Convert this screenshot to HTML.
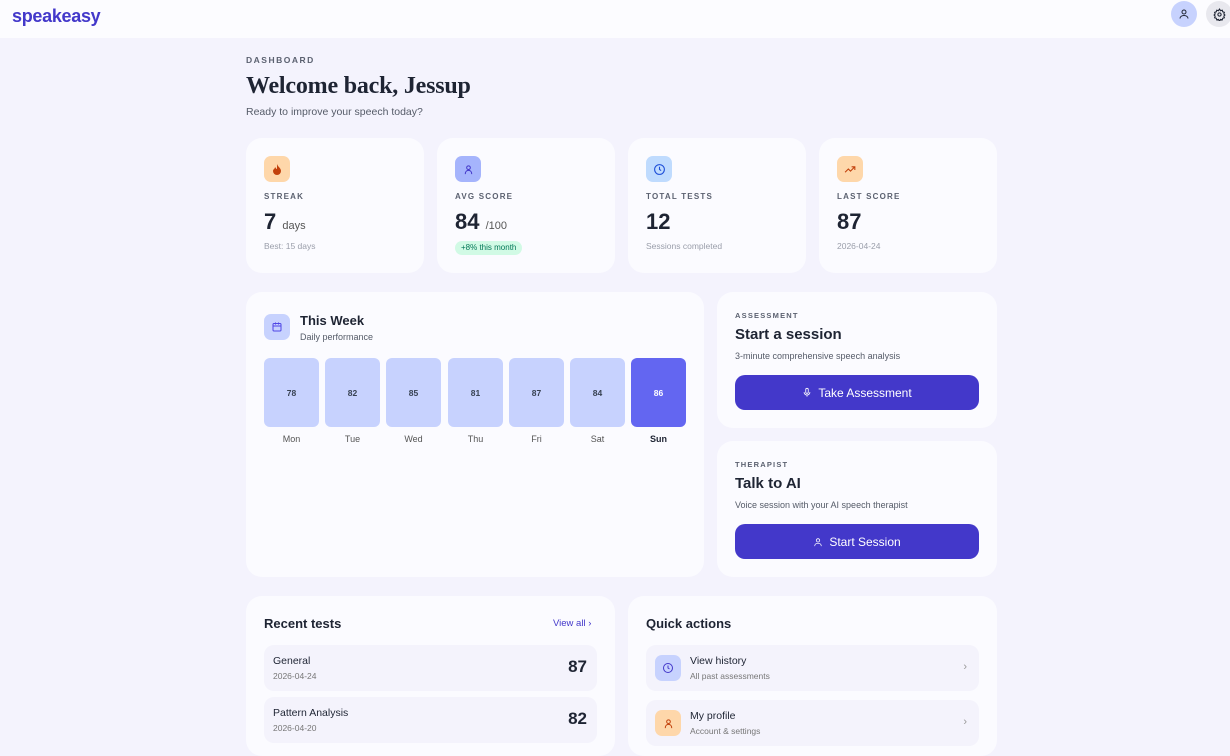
<!DOCTYPE html><html><head><style>
*{box-sizing:border-box;margin:0;padding:0}
body{width:1230px;height:729px;overflow:hidden;background:#f4f3fd;font-family:"Liberation Sans",sans-serif;color:#1e2433;position:relative}
.hdr{position:absolute;left:0;top:0;width:1230px;height:38px;background:#fcfcff}
.logo{position:absolute;left:12px;top:6px;font-size:18px;font-weight:bold;color:#4338ca;letter-spacing:-0.3px}
.circ{position:absolute;top:1px;width:26px;height:26px;border-radius:50%;display:flex;align-items:center;justify-content:center}
.card{position:absolute;background:#fbfbff;border-radius:16px}
.ico{position:absolute;width:26px;height:26px;border-radius:7px;display:flex;align-items:center;justify-content:center}
.lbl{position:absolute;font-size:8px;font-weight:bold;letter-spacing:1.2px;color:#5b6170}
.big{position:absolute;font-size:22px;font-weight:bold}
.sm{position:absolute;font-size:8.5px;color:#9a9eaa}
.bar{position:absolute;top:66px;width:55px;height:69px;background:#c7d2fe;border-radius:6px;font-size:8.5px;font-weight:bold;display:flex;align-items:center;justify-content:center;color:#374151}
.day{position:absolute;top:142px;width:55px;text-align:center;font-size:9px;color:#555}
.btn{position:absolute;left:18px;width:244px;height:35px;border-radius:10px;background:#4338ca;color:#fff;font-size:12px;display:flex;align-items:center;justify-content:center;gap:6px}
.row{position:absolute;left:18px;width:333px;height:46px;background:#f4f3fc;border-radius:10px}
</style></head><body>
<div class="hdr"><div class="logo">speakeasy</div>
<div class="circ" style="left:1171px;background:#c7d2fe"><svg width="12" height="12" viewBox="0 0 24 24" fill="none" stroke="#1e2433" stroke-width="2"><circle cx="12" cy="8" r="4"/><path d="M4 21c0-4 4-6 8-6s8 2 8 6"/></svg></div>
<div class="circ" style="left:1206px;background:#e8e8ee"><svg width="13" height="13" viewBox="0 0 24 24" fill="none" stroke="#1e2433" stroke-width="2"><circle cx="12" cy="12" r="3"/><path d="M12 2l2 3 3-1 1 3 3 1-1 3 2 2-2 2 1 3-3 1-1 3-3-1-2 3-2-3-3 1-1-3-3-1 1-3-2-2 2-2-1-3 3-1 1-3 3 1z"/></svg></div></div>
<div style="position:absolute;left:246px;top:55px;font-size:8.5px;font-weight:bold;letter-spacing:1.5px;color:#5b6170">DASHBOARD</div>
<div style="position:absolute;left:246px;top:73px;font-family:'Liberation Serif',serif;font-size:24px;font-weight:bold;letter-spacing:-0.2px">Welcome back, Jessup</div>
<div style="position:absolute;left:246px;top:106px;font-size:10.5px;color:#555b68">Ready to improve your speech today?</div>

<div class="card" style="left:246px;top:138px;width:178px;height:135px"><div class="ico" style="left:18px;top:18px;background:#fed7aa"><svg width="10" height="11" viewBox="0 0 10 11"><path d="M5 0C6 3 9 4 9 7a4 4 0 01-8 0c0-2 2-2 2-4 1 1 1 2 2 2z" fill="#c2410c"/></svg></div><div class="lbl" style="left:18px;top:54px">STREAK</div><div class="big" style="left:18px;top:71px">7 <span style="font-size:11px;font-weight:normal;color:#555">days</span></div><div class="sm" style="left:18px;top:103px">Best: 15 days</div></div>
<div class="card" style="left:437px;top:138px;width:178px;height:135px"><div class="ico" style="left:18px;top:18px;background:#a5b4fc"><svg width="11" height="11" viewBox="0 0 24 24" fill="none" stroke="#4338ca" stroke-width="2.2"><circle cx="12" cy="8" r="4"/><path d="M5 22c0-5 3-8 7-8s7 3 7 8"/></svg></div><div class="lbl" style="left:18px;top:54px">AVG SCORE</div><div class="big" style="left:18px;top:71px">84 <span style="font-size:11px;font-weight:normal;color:#555">/100</span></div><div style="position:absolute;left:18px;top:103px;height:14px;padding:0 6px;border-radius:7px;background:#d1fae5;color:#047857;font-size:8px;line-height:14px">+8% this month</div></div>
<div class="card" style="left:628px;top:138px;width:178px;height:135px"><div class="ico" style="left:18px;top:18px;background:#bfdbfe"><svg width="13" height="13" viewBox="0 0 24 24" fill="none" stroke="#1d4ed8" stroke-width="2"><circle cx="12" cy="12" r="9"/><path d="M12 7v5l3 2"/></svg></div><div class="lbl" style="left:18px;top:54px">TOTAL TESTS</div><div class="big" style="left:18px;top:71px">12</div><div class="sm" style="left:18px;top:103px">Sessions completed</div></div>
<div class="card" style="left:819px;top:138px;width:178px;height:135px"><div class="ico" style="left:18px;top:18px;background:#fed7aa"><svg width="13" height="13" viewBox="0 0 24 24" fill="none" stroke="#c2410c" stroke-width="2"><path d="M2 17l6-6 4 4 8-8M14 7h6v6"/></svg></div><div class="lbl" style="left:18px;top:54px">LAST SCORE</div><div class="big" style="left:18px;top:71px">87</div><div class="sm" style="left:18px;top:103px">2026-04-24</div></div>

<div class="card" style="left:246px;top:292px;width:458px;height:285px">
<div class="ico" style="left:18px;top:22px;background:#c7d2fe"><svg width="12" height="12" viewBox="0 0 24 24" fill="none" stroke="#4f46e5" stroke-width="2"><rect x="4" y="5" width="16" height="15" rx="2"/><path d="M4 10h16M9 3v4M15 3v4"/></svg></div>
<div style="position:absolute;left:54px;top:21px;font-size:13px;font-weight:bold">This Week</div>
<div style="position:absolute;left:54px;top:40px;font-size:9px;color:#555b68">Daily performance</div>
<div class="bar" style="left:18px">78</div><div class="bar" style="left:79px">82</div><div class="bar" style="left:140px">85</div><div class="bar" style="left:202px">81</div><div class="bar" style="left:263px">87</div><div class="bar" style="left:324px">84</div><div class="bar" style="left:385px;background:#6366f1;color:#fff">86</div>
<div class="day" style="left:18px">Mon</div><div class="day" style="left:79px">Tue</div><div class="day" style="left:140px">Wed</div><div class="day" style="left:202px">Thu</div><div class="day" style="left:263px">Fri</div><div class="day" style="left:324px">Sat</div><div class="day" style="left:385px;font-weight:bold;color:#1e2433">Sun</div>
</div>

<div class="card" style="left:717px;top:292px;width:280px;height:136px"><div class="lbl" style="left:18px;top:19px;font-size:7.5px">ASSESSMENT</div><div style="position:absolute;left:18px;top:34px;font-size:15px;font-weight:bold">Start a session</div><div style="position:absolute;left:18px;top:59px;font-size:9px;color:#555b68">3-minute comprehensive speech analysis</div><div class="btn" style="top:83px"><svg width="10" height="11" viewBox="0 0 24 24" fill="none" stroke="#fff" stroke-width="2"><rect x="9" y="2" width="6" height="12" rx="3"/><path d="M5 11a7 7 0 0014 0M12 18v4"/></svg>Take Assessment</div></div>
<div class="card" style="left:717px;top:441px;width:280px;height:136px"><div class="lbl" style="left:18px;top:19px;font-size:7.5px">THERAPIST</div><div style="position:absolute;left:18px;top:34px;font-size:15px;font-weight:bold">Talk to AI</div><div style="position:absolute;left:18px;top:59px;font-size:9px;color:#555b68">Voice session with your AI speech therapist</div><div class="btn" style="top:83px"><svg width="10" height="10" viewBox="0 0 24 24" fill="none" stroke="#fff" stroke-width="2"><circle cx="12" cy="8" r="4"/><path d="M4 22c0-5 4-7 8-7s8 2 8 7"/></svg>Start Session</div></div>

<div class="card" style="left:246px;top:596px;width:369px;height:160px"><div style="position:absolute;left:18px;top:20px;font-size:13px;font-weight:bold">Recent tests</div><div style="position:absolute;left:307px;top:22px;font-size:9.5px;color:#4338ca">View all ›</div>
<div class="row" style="top:49px"><div style="position:absolute;left:9px;top:10px;font-size:10.5px">General</div><div style="position:absolute;left:9px;top:26px;font-size:8.5px;color:#777">2026-04-24</div><div style="position:absolute;right:10px;top:12px;font-size:17px;font-weight:bold">87</div></div>
<div class="row" style="top:101px"><div style="position:absolute;left:9px;top:10px;font-size:10.5px">Pattern Analysis</div><div style="position:absolute;left:9px;top:26px;font-size:8.5px;color:#777">2026-04-20</div><div style="position:absolute;right:10px;top:12px;font-size:17px;font-weight:bold">82</div></div></div>
<div class="card" style="left:628px;top:596px;width:369px;height:160px"><div style="position:absolute;left:18px;top:20px;font-size:13px;font-weight:bold">Quick actions</div>
<div class="row" style="top:49px"><div class="ico" style="left:9px;top:10px;background:#c7d2fe"><svg width="12" height="12" viewBox="0 0 24 24" fill="none" stroke="#4338ca" stroke-width="2"><circle cx="12" cy="12" r="9"/><path d="M12 7v5l3 2"/></svg></div><div style="position:absolute;left:44px;top:10px;font-size:10.5px">View history</div><div style="position:absolute;left:44px;top:26px;font-size:8.5px;color:#777">All past assessments</div><div style="position:absolute;right:12px;top:16px;font-size:11px;color:#999">›</div></div>
<div class="row" style="top:104px"><div class="ico" style="left:9px;top:10px;background:#fed7aa"><svg width="11" height="11" viewBox="0 0 24 24" fill="none" stroke="#c2410c" stroke-width="2.2"><circle cx="12" cy="8" r="4"/><path d="M5 22c0-5 3-8 7-8s7 3 7 8"/></svg></div><div style="position:absolute;left:44px;top:10px;font-size:10.5px">My profile</div><div style="position:absolute;left:44px;top:26px;font-size:8.5px;color:#777">Account &amp; settings</div><div style="position:absolute;right:12px;top:16px;font-size:11px;color:#999">›</div></div></div>
</body></html>
